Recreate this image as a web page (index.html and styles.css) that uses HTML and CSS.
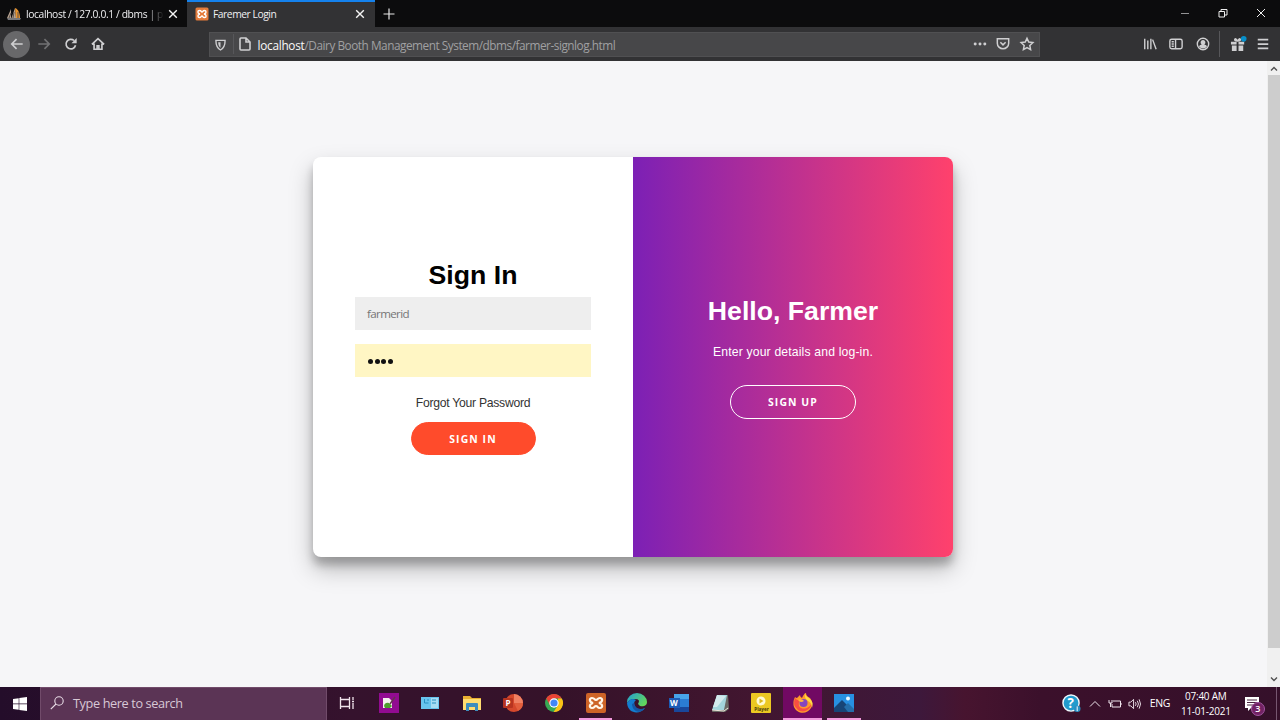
FILE: index.html
```html
<!DOCTYPE html>
<html lang="en">
<head>
<meta charset="utf-8">
<title>Faremer Login</title>
<link rel="stylesheet" href="styles.css">
</head>
<body>
<div class="screen">
  <header class="tabs">
    <div class="tab tab-idle">
      <svg class="fav" viewBox="0 0 14 14"><path d="M0 11 4 2v9zM4.500 11 8 1l1 10z" fill="#b5a290"/><path d="M8 1c3.500 1 5 6 5 10H9z" fill="#e9952f"/><path d="M0 11h14l-1 2H1z" fill="#77777a"/><path d="M2 11 4 6M6 11l1-6M11 11V5" stroke="#594f49"/></svg>
      <span class="tab-name fade">localhost / 127.0.0.1 / dbms | pl</span>
      <svg class="close" viewBox="0 0 10 10"><path d="m1.200 1.200 7.600 7.600m0-7.600L1.200 8.800"/></svg>
    </div>
    <div class="tab tab-active">
      <svg class="fav" viewBox="0 0 14 14"><rect x=".5" y=".5" width="13" height="13" rx="1.500" fill="#e47b3b"/><path d="M5 7C2 6.500 2.500 3.500 4.500 3.500S6 5 7 5s.7-1.500 2.500-1.500S12 6.500 9 7c3 .5 2.500 3.500.5 3.500S8 9 7 9s-.7 1.500-2.500 1.500S2 7.500 5 7z" fill="none" stroke="#fff" stroke-width="1.400"/></svg>
      <span class="tab-name">Faremer Login</span>
      <svg class="close" viewBox="0 0 10 10"><path d="m1.200 1.200 7.600 7.600m0-7.600L1.200 8.800"/></svg>
    </div>
    <svg class="plus" viewBox="0 0 12 12"><path d="M6 .5v11M.5 6h11"/></svg>
    <div class="window-buttons">
      <svg viewBox="0 0 12 12"><path d="M2 6.500h8" opacity=".6"/></svg>
      <svg viewBox="0 0 12 12"><path d="M2 4.500h5.500V10H2zM4 4.500v-2h6V8H7.500"/></svg>
      <svg viewBox="0 0 12 12"><path d="m2 2 8 8m0-8-8 8"/></svg>
    </div>
  </header>

  <nav class="toolbar">
    <div class="nav-buttons">
      <span class="back"><svg viewBox="0 0 16 16"><path d="M14.500 8H2m5.500-5.500L2 8l5.500 5.500"/></svg></span>
      <svg class="dim" viewBox="0 0 16 16"><path d="M1.500 8H14M8.500 2.500 14 8l-5.500 5.500"/></svg>
      <svg viewBox="0 0 16 16"><path d="M13.200 9.500A5.500 5.500 0 1 1 11.500 4"/><path d="M14.500 1v6h-6z" class="solid thin"/></svg>
      <svg viewBox="0 0 16 16"><path d="M1 8.500 8 2l7 6.500M3.500 7.500V14h9V7.500M7 14v-4h2v4"/></svg>
    </div>
    <div class="address">
      <svg class="shield" viewBox="0 0 12 14"><path d="M1 2.500h10c0 5.500-1.500 8.500-5 10.500-3.500-2-5-5-5-10.500z"/><path d="M6 4.500v6C4.500 9.500 3.500 7.500 3.500 4.500z" class="solid thin"/></svg>
      <i class="bar"></i>
      <svg class="doc" viewBox="0 0 12 14"><path d="M2 1h5l4 4v7q0 1-1 1H2q-1 0-1-1V2q0-1 1-1zM7 1v4h4"/></svg>
      <span class="url"><b>localhost</b>/Dairy Booth Management System/dbms/farmer-signlog.html</span>
      <div class="address-icons">
        <svg viewBox="0 0 16 16"><g class="solid thin"><circle cx="2.500" cy="8" r="1.700"/><circle cx="8" cy="8" r="1.700"/><circle cx="13.500" cy="8" r="1.700"/></g></svg>
        <svg viewBox="0 0 16 16"><path d="M1.500 2h13v5a6.500 6.500 0 0 1-13 0zM5 6l3 3 3-3"/></svg>
        <svg viewBox="0 0 16 16"><path d="m8 1.500 2 4.300 4.700.6-3.500 3.200.9 4.800L8 12l-4.100 2.400.9-4.800-3.500-3.200 4.700-.6z"/></svg>
      </div>
    </div>
    <div class="tools">
      <svg viewBox="0 0 16 16"><path d="M2 2v12M5.500 4v10M9 2v12M11 3l4 11"/></svg>
      <svg viewBox="0 0 16 16"><rect x="1" y="2.500" width="14" height="11" rx="2"/><path d="M7.500 2.500v11M3 5.500h2.500M3 8h2.500M3 10.500h2.500"/></svg>
      <svg viewBox="0 0 16 16"><circle cx="8" cy="8" r="6.500"/><path d="M8 3.500a2.700 2.700 0 0 1 1.500 5q3 .5 3 2.500A6 6 0 0 1 3.500 11q0-2 3-2.500A2.700 2.700 0 0 1 8 3.500z" class="solid thin"/></svg>
      <i class="bar tall"></i>
      <svg class="gift" viewBox="0 0 18 18"><g class="solid thin"><path d="M1 6h6v3H1zM9 6h6v3H9zM2 10h5v6H2zM9 10h5v6H9z"/><path d="M8 6Q3 6 4.500 3 6 1 8 4q2-3 3.500-1Q13 6 8 6z"/></g><circle cx="14.500" cy="3" r="3" fill="#078fca" stroke="none"/></svg>
      <svg class="menu" viewBox="0 0 16 16"><path d="M2 3h12M2 8h12M2 13h12" stroke-width="2"/></svg>
    </div>
  </nav>

  <main class="viewport">
    <div class="page">
      <section class="card">
        <form class="half sign-in">
          <h1>Sign In</h1>
          <div class="field">farmerid</div>
          <div class="field filled"><i></i><i></i><i></i><i></i></div>
          <a class="forgot">Forgot Your Password</a>
          <button type="button" class="pill">SIGN IN</button>
        </form>
        <div class="half welcome">
          <h1>Hello, Farmer</h1>
          <p>Enter your details and log-in.</p>
          <button type="button" class="pill ghost">SIGN UP</button>
        </div>
      </section>
    </div>
    <aside class="scrollbar">
      <svg viewBox="0 0 10 10"><path d="m2 6.500 3-3 3 3"/></svg>
      <div class="thumb"></div>
      <svg viewBox="0 0 10 10"><path d="m2 3.500 3 3 3-3"/></svg>
    </aside>
  </main>

  <footer class="taskbar">
    <div class="start"><svg viewBox="0 0 14 14"><path fill="#fff" d="m0 2 5.700-.8v5.400H0zM6.300 1.100 14 0v6.600H6.300zM0 7.200h5.700v5.600L0 12zM6.300 7.200H14V14l-7.700-1.100z"/></svg></div>
    <div class="search"><svg viewBox="0 0 14 14"><circle cx="9" cy="5" r="4.200"/><path d="M6 8 .8 13.200"/></svg><span>Type here to search</span></div>
    <div class="apps">
      <div class="app"><svg viewBox="0 0 20 20"><path d="M3.500 4v2.500h9V4M3.500 16v-2.500h9V16M3.500 6.500v7M12.500 6.500v7M16 4v3M16 10v6M15 8.500h2" fill="none" stroke="#f0e3eb" stroke-width="1.300"/></svg></div>
      <div class="app"><svg viewBox="0 0 20 20"><path fill="#920b91" d="M0 0h20v20H0z"/><path fill="#f4f0ee" d="M4 5h6l3 3v7H4z"/><path d="M5 13q1-4 5-3l3 3-2 2H6z" fill="#4d9d2c"/><path d="m11 11 5-7" stroke="#66354e" stroke-width="1.500"/></svg></div>
      <div class="app"><svg viewBox="0 0 20 20"><path fill="#68c4ef" d="M1 4h18v12H1z"/><path fill="#a6dcf4" d="M11 5h7v10h-7z"/><path d="M4.500 6v4h4M7 7h2M12 7h4M12 10h4" stroke="#278fc2" fill="none"/></svg></div>
      <div class="app"><svg viewBox="0 0 20 20"><path fill="#e9af32" d="M1 3h7l2 2h9v12H1z"/><path fill="#ffdc70" d="M1 6h18v11H1z"/><path fill="#3d8dbd" d="M4 18v-7q0-1 1-1h10q1 0 1 1v7h-3v-4H7v4z"/></svg></div>
      <div class="app"><svg viewBox="0 0 20 20"><circle cx="11" cy="10" r="9" fill="#d5482c"/><path d="M11 1a9 9 0 0 1 9 9h-9z" fill="#f08062"/><path d="M11 10h9a9 9 0 0 1-5 8z" fill="#e35f3d"/><rect y="5" width="10" height="10" rx="1" fill="#b73420"/><text x="2.600" y="13" class="letter">P</text></svg></div>
      <div class="app"><svg viewBox="0 0 20 20"><circle cx="10" cy="10" r="9" fill="#36a853"/><path d="M2.200 5.500A9 9 0 0 1 17.800 5.500H10L6.100 12.200z" fill="#e94335"/><path d="M17.800 5.500A9 9 0 0 1 9.600 19L14 12V5.500z" fill="#fbc116"/><circle cx="10" cy="10" r="4.700" fill="#fff"/><circle cx="10" cy="10" r="3.600" fill="#4286f5"/></svg></div>
      <div class="app running"><svg viewBox="0 0 20 20"><rect width="20" height="20" rx="2" fill="#cd6427"/><path d="M7 10c-4-1-4-5-1-5s2 2 4 2 1-2 4-2 3 4-1 5c4 1 4 5 1 5s-2-2-4-2-1 2-4 2-3-4 1-5z" fill="none" stroke="#fff6e9" stroke-width="2.200"/></svg></div>
      <div class="app"><svg viewBox="0 0 20 20"><defs><linearGradient id="edge" x1="0" y1="0" x2="1" y2=".6"><stop stop-color="#219ed7"/><stop offset="1" stop-color="#62d65c"/></linearGradient></defs><path d="M0 9a10 9 0 0 1 20 0c0 4-4 5-7 4l-2-2q3-5-3-5Q2 6 0 10z" fill="url(#edge)"/><path d="M0 10q4-6 9-3-3 2-1 6c2 4 7 4 10 2-5 7-17 6-18-5z" fill="#137ed0"/><path d="M5 11c0 4 3 8 7 7.700 3-.5 5-2 6-3.700-5 2-10 1-11-5z" fill="#1458a5"/></svg></div>
      <div class="app"><svg viewBox="0 0 20 20"><path fill="#2b7cd3" d="M5 1h15v18H5z"/><path fill="#48a4e9" d="M5 1h15v5H5z"/><path fill="#19479b" d="M5 14h15v5H5z"/><path fill="#1d5cb6" d="M0 5h11v10H0z"/><text x="1" y="13" class="letter">W</text></svg></div>
      <div class="app"><svg viewBox="0 0 20 20"><path d="M7 2h11l1 14-4 3H2z" fill="#6a6966"/><path d="M7 2h10l-3 15H2z" fill="#a3d5dc"/><path d="m7 2 9 1-9 11H3z" fill="#d3eaed"/><path d="m2 17 12 1 4-3" fill="none" stroke="#eee9dc"/></svg></div>
      <div class="app"><svg viewBox="0 0 20 20"><rect width="20" height="20" rx="1" fill="#ecc922"/><circle cx="10" cy="8" r="4.500" fill="#fffbd2"/><path d="m8.500 5.500 4 2.500-4 2.500z" fill="#dcb91d"/><text x="3.300" y="18" class="player">Player</text></svg></div>
      <div class="app running selected"><svg viewBox="0 0 20 20"><path d="M2 4q1 1 2 1l3-3q0 2 2 3c1-3 3-5 4-5q0 3 4 5 4 5 1 10c-4 7-14 6-17-1Q-.5 9 2 4z" fill="#ff9a2c"/><path d="M2 5Q-1 12 5 17c6 4 13-1 14-7-2 5-10 8-13 3Q5 8 8 7 4 8 2 5z" fill="#f84e43"/><path d="M12 0q0 3 4 5 5 4 3 10 0-5-4-7-4-3-3-8z" fill="#ffdb45"/><circle cx="10.500" cy="10" r="4" fill="#8646bf"/><path d="M5 7q4-2 6 1-3 2-5 0z" fill="#ffb83e"/></svg></div>
      <div class="app running"><svg viewBox="0 0 20 20"><path fill="#2790e2" d="M0 1h20v18H0z"/><path d="M0 15 8 7l12 12H0z" fill="#174577"/><path d="m10 14 4-4 6 6v3h-6z" fill="#246eaa"/><circle cx="14" cy="5.500" r="2" fill="#eaf8ff"/></svg></div>
    </div>
    <div class="tray">
      <svg class="help" viewBox="0 0 20 20"><circle cx="9.500" cy="9.500" r="8.500" fill="#219bcd" stroke="#eef8fc" stroke-width="1.500"/><text x="5.800" y="14.500" class="question">?</text><circle cx="16" cy="15.500" r="3.500" fill="#2a8ec2" stroke="none"/><path d="M16 13v5" stroke="#fff"/></svg>
      <svg class="chevron" viewBox="0 0 12 12"><path d="m1 8.500 5-5 5 5"/></svg>
      <svg class="battery" viewBox="0 0 14 12"><path d="M5 3h7.500v6H4V6M13 5v2M1 2v3h3V2M2.500 5v4"/></svg>
      <svg class="sound" viewBox="0 0 14 12"><path d="M1 4h2l3-3v10L3 8H1zM8 4q1.500 2 0 4M10 2.500q2.500 3.500 0 7M12 1q3 5 0 10"/></svg>
      <span class="lang">ENG</span>
      <div class="clock"><span>07:40 AM</span><span>11-01-2021</span></div>
      <div class="notice"><svg viewBox="0 0 14 14"><path d="M0 0h14v11H6l-3 3v-3H0z" fill="#fff"/><path d="M2 3h10M2 5.500h10M2 8h7" stroke="#4b243f"/></svg><span class="count">3</span></div>
      <i class="desktop-edge"></i>
    </div>
  </footer>
</div>
</body>
</html>
```
FILE: styles.css
```css
* { box-sizing: border-box; }
body { margin: 0; font-family: "Open Sans", "Noto Sans", sans-serif; }
svg { display: block; flex: none; overflow: visible; }
.screen { width: 1280px; height: 720px; overflow: hidden; display: grid; grid-template: 27px 34px 626px 33px / 1280px; }

.tabs { display: flex; align-items: center; background: #0c0c0d; color: #f0f0f2; }
.tab { display: flex; align-items: center; height: 27px; padding-top: 1px; font-size: 10.3px; letter-spacing: -.46px; }
.tab-idle { width: 187px; padding-left: 7px; }
.tab-active { width: 188px; padding-left: 8px; background: #323234; border-top: 2px solid #1582ed; padding-top: 0; }
.tab-active .tab-name { padding-bottom: 1px; }
.fav { width: 14px; height: 14px; margin-right: 5px; }
.tab-active .fav { margin-right: 4px; margin-bottom: 1px; }
.tab-name { width: 142px; white-space: nowrap; }
.tab .fade { width: 137px; letter-spacing: -.38px; -webkit-mask-image: linear-gradient(90deg, #000 120px, transparent 138px); mask-image: linear-gradient(90deg, #000 120px, transparent 138px); }
.close { width: 10px; height: 10px; margin-left: 5px; fill: none; stroke: #f5f5f5; stroke-width: 1.4; }
.tab-active .close { margin-left: auto; margin-right: 10px; margin-bottom: 2px; }
.plus { width: 12px; height: 12px; margin-left: 8px; fill: none; stroke: #e8e8e8; stroke-width: 1.2; }
.window-buttons { display: flex; gap: 26px; margin-left: auto; padding-right: 13px; padding-bottom: 1px; }
.window-buttons svg { width: 12px; height: 12px; fill: none; stroke: #eee; }

.toolbar { display: flex; align-items: center; background: #323234; }
.toolbar svg { width: 14px; height: 14px; fill: none; stroke: #cfcfd1; stroke-width: 1.9; }
.toolbar .solid { fill: #cfcfd1; }
.toolbar .thin { stroke: none; }
.nav-buttons { flex: none; width: 208.500px; display: flex; align-items: center; gap: 13px; padding-left: 3px; }
.nav-buttons .dim { opacity: .4; margin-left: -6px; }
.back { width: 27px; height: 27px; border-radius: 50%; background: #68686a; display: grid; place-items: center; }
.address { flex: none; display: flex; align-items: center; width: 831px; height: 25px; padding: 0 5px; background: #474749; border: 1px solid #505052; }
.toolbar .shield { width: 11px; height: 13px; stroke-width: 1.5; }
.bar { width: 1px; height: 20px; background: #57575a; margin: 0 5px 0 7px; }
.toolbar .doc { width: 12px; height: 14px; stroke-width: 1.6; }
.url { margin-left: 7px; font-size: 11.8px; color: #a0a0a2; white-space: nowrap; letter-spacing: -.47px; padding-top: 1px; }
.url b { color: #fafafa; font-weight: 400; letter-spacing: -.27px; }
.address-icons { display: flex; gap: 9.500px; margin-left: auto; }
.toolbar .address-icons svg { stroke-width: 1.7; }
.tools { flex: 1; display: flex; align-items: center; padding-left: 103px; }
.toolbar .tools svg { margin-right: 12.700px; stroke-width: 1.6; }
.tools .tall { height: 26px; margin: 0 10px 0 -4px; }
.toolbar .tools .gift { width: 17px; height: 17px; margin-right: 9.500px; }
.toolbar .tools .menu { margin-right: 0; }

.viewport { display: flex; background: #f6f6f8; }
.page { width: 1267px; padding-top: 96px; }
.card { display: grid; grid-template-columns: 1fr 1fr; width: 640px; height: 400px; margin-left: 313px; border-radius: 8px; overflow: hidden; background: #fff; box-shadow: 0 12px 23px rgba(0,0,0,.25), 0 8px 8px rgba(0,0,0,.22); }
.half { display: flex; flex-direction: column; align-items: center; font-family: "Liberation Sans", Arial, sans-serif; }
.half h1 { margin: 0; font-size: 26.67px; line-height: 30px; }
.sign-in { padding-top: 103px; }
.sign-in h1 { margin-bottom: 7px; }
.field { width: 236px; height: 33px; padding-left: 12px; background: #eee; display: flex; align-items: center; color: #757575; font: 11.6px "Open Sans", sans-serif; letter-spacing: -.65px; }
.filled { margin-top: 13.500px; background: #fff6c4; padding: 3px 0 0 13px; gap: 1.7px; }
.filled i { width: 5px; height: 5px; border-radius: 50%; background: #111; }
.forgot { margin: 19px 0 11.500px; font-size: 12.2px; line-height: 15px; color: #333; letter-spacing: -.27px; }
.pill { width: 125px; height: 33px; padding: 0; border: 1px solid #ff4b2b; border-radius: 17px; background: #ff4b2b; color: #fff; font: bold 10.4px "Open Sans", sans-serif; letter-spacing: 1.1px; }
.welcome { padding-top: 139px; color: #fff; background: linear-gradient(90deg, #7c20b5, #ff416c); }
.welcome p { margin: 18px 0 25px; font-size: 12.2px; line-height: 16px; letter-spacing: .16px; }
.ghost { width: 126px; height: 34px; background: transparent; border-color: #fff; }
.scrollbar { flex: none; width: 13px; display: flex; flex-direction: column; align-items: center; background: #f0f0f0; padding: 3px 0; }
.scrollbar svg { width: 10px; height: 10px; fill: none; stroke: #505050; stroke-width: 1.4; }
.thumb { width: 12px; height: 573px; background: #cdcdcd; margin: 1px 0 26px; }

.taskbar { display: flex; color: #fff; background: linear-gradient(90deg, #240d2a 0, #35122d 350px, #351229 560px, #421630 760px, #3d183b 920px, #47142f 965px, #3b102b 1040px, #35102a 1280px); }
.start { width: 40px; display: grid; place-items: center; }
.start svg { width: 14px; height: 14px; }
.search { width: 287px; display: flex; align-items: center; gap: 9px; padding: 0 0 2px 9px; background: #5b3455; border: 1px solid #714b6a; border-bottom: 0; color: #d8c8d5; font-size: 12.7px; letter-spacing: -.38px; }
.search svg { width: 14px; height: 14px; fill: none; stroke: #e8dce6; stroke-width: 1.1; }
.apps { display: grid; grid-template-columns: repeat(13, 41.4px); margin-left: -.3px; }
.app { display: grid; place-items: center; border-bottom: 2px solid transparent; padding-top: 1px; }
.app svg { width: 20px; height: 20px; }
.running { border-color: #f39add; margin: 0 4px; }
.selected { background: #710963; margin: 0 1px; }
.letter { font: bold 8px "Open Sans", sans-serif; fill: #fff; }
.player { font: bold 4.6px "Open Sans", sans-serif; fill: #493b0b; }
.tray { flex: 1; display: flex; align-items: center; padding-left: 197px; }
.tray > svg { fill: none; stroke: #efe5ed; }
.help { width: 19px; height: 19px; margin-right: 8px; }
.question { font: bold 14px "Open Sans", sans-serif; fill: #fff; stroke: none; }
.chevron { width: 12px; height: 12px; margin-right: 7px; }
.battery { width: 14px; height: 12px; margin-right: 6px; }
.sound { width: 13px; height: 12px; margin-right: 9px; }
.lang { width: 30px; font-size: 10.5px; letter-spacing: -.4px; padding-bottom: 1px; }
.clock { width: 52px; display: flex; flex-direction: column; align-items: center; font-size: 10px; line-height: 15px; letter-spacing: -.25px; white-space: nowrap; }
.notice { position: relative; margin-left: 13px; }
.notice svg { width: 14px; height: 14px; }
.count { position: absolute; left: 6px; top: 5px; width: 14px; height: 14px; border-radius: 50%; background: #722264; border: 1px solid #a155a0; font-size: 9px; font-weight: 600; line-height: 12px; text-align: center; }
.desktop-edge { width: 1px; height: 33px; background: #765670; margin-left: auto; margin-right: 3px; }
```
